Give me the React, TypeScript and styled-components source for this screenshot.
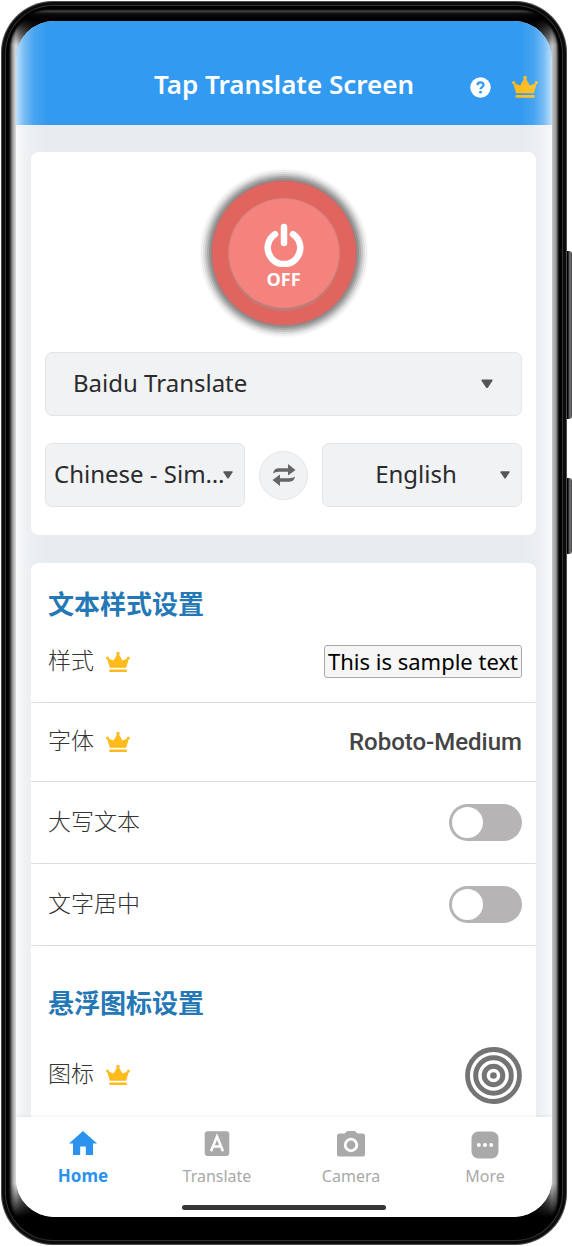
import React from "react";
import styled, { createGlobalStyle, css } from "styled-components";

const latin = `"Noto Sans", "Noto Sans CJK SC", sans-serif`;

const GlobalStyle = createGlobalStyle`
  *, *::before, *::after { box-sizing: border-box; }
  body { margin: 0; background: #fff; font-family: ${latin}; }
  button, input, select { font: inherit; color: inherit; }
  button { padding: 0; border: 0; background: none; cursor: pointer; }
  h1, h2 { margin: 0; }
`;

const Stage = styled.div`
  position: relative;
  padding: 1px 5px 1px 1px;
`;

const SideKey = styled.span<{ $top: number; $height: number }>`
  position: absolute;
  right: 0;
  top: ${(p) => p.$top}px;
  width: 6px;
  height: ${(p) => p.$height}px;
  border-radius: 0 3px 3px 0;
  background: linear-gradient(90deg, #000 0 2px, #55555a 3px, #77777a 5px, #222 6px);
`;

const Phone = styled.div`
  position: relative;
  min-height: calc(100vh - 3px);
  display: flex;
  padding: 20px 15px 28px;
  border-radius: 52px;
  overflow: hidden;
  box-shadow: inset 0 0 0 1px #4a4e4c, inset 0 0 0 4px #0c0c0c, inset 0 0 0 5px #333, inset 0 0 2px 8px #000;
  background:
    linear-gradient(180deg, #000 0, #000 8px, #444 10px, #0a0a0a 13px, #000 18px, transparent 44px),
    linear-gradient(0deg, #000 0, #000 28px, transparent 62px),
    linear-gradient(90deg, #000 7px, #333 9px, #aaa 12px, #dcdcdc 15px, #999 20px, #333 32px, #000 44px,
      #000 calc(100% - 44px), #333 calc(100% - 30px), #888 calc(100% - 19px), #c4c4c4 calc(100% - 15px), #999 calc(100% - 11px), #111 calc(100% - 8px));
`;

const Screen = styled.div`
  position: relative;
  flex: 1;
  min-width: 0;
  display: flex;
  flex-direction: column;
  overflow: hidden;
  border-radius: 38px;
  background: #e8ecef;

  &::after {
    content: "";
    position: absolute;
    inset: 0;
    pointer-events: none;
    background: linear-gradient(90deg, rgba(255, 255, 255, 0.7) 0, rgba(255, 255, 255, 0.35) 8px, rgba(255, 255, 255, 0.1) 18px, transparent 32px,
      transparent calc(100% - 32px), rgba(255, 255, 255, 0.1) calc(100% - 18px), rgba(255, 255, 255, 0.35) calc(100% - 8px), rgba(255, 255, 255, 0.7) 100%);
  }
`;

const Header = styled.header`
  display: grid;
  grid-template-columns: 1fr auto 1fr;
  align-items: center;
  height: 104px;
  padding: 22px 14px 0;
  background: #329af0;
  color: #fff;
`;

const Title = styled.h1`
  grid-column: 2;
  font-size: 26px;
  line-height: 36px;
  font-weight: 600;
  white-space: nowrap;
`;

const HeaderActions = styled.div`
  display: flex;
  justify-content: flex-end;
  align-items: center;
  gap: 21px;
  padding-top: 6px;
`;

const IconButton = styled.button`
  display: flex;
`;

const Content = styled.main`
  flex: 1;
  display: flex;
  flex-direction: column;
  gap: 28px;
  padding: 27px 16px 0 15px;
`;

const Card = styled.section`
  border-radius: 8px;
  background: #fff;
`;

const TranslateCard = styled(Card)`
  display: flex;
  flex-direction: column;
  align-items: center;
  gap: 27px;
  padding: 29px 14px 28px;
`;

const PowerButton = styled.button`
  display: flex;
  width: 144px;
  height: 144px;
  padding: 18px 17px 17px;
  border-radius: 50%;
  background: #e0655f;
  box-shadow: 0 0 0 1px #a57a78, 0 0 0 3px #929292, 0 0 0 5px #a9a9a9, 0 0 0 7px #c4c4c4,
    0 0 0 9px #dcdcdc, 0 0 0 11px #efefef, 0 0 2px 12px #f6f6f6;
`;

const PowerFace = styled.span`
  flex: 1;
  display: flex;
  flex-direction: column;
  align-items: center;
  gap: 2px;
  padding-top: 24px;
  border-radius: 50%;
  background: #f4837d;
  box-shadow: 0 3px 1px #bf7d7a, 0 0 0 1px #d5827e;
  color: #fff;
  font-family: "Open Sans", sans-serif;
  font-size: 18px;
  line-height: 20px;
  font-weight: 700;
`;

const Picker = styled.div<{ $inset: number; $caret: number; $centered?: boolean }>`
  position: relative;
  flex: 1;
  min-width: 0;
  align-self: stretch;

  select {
    appearance: none;
    display: block;
    width: 100%;
    height: 64px;
    padding: 0 ${(p) => (p.$centered ? 12 : p.$caret + 6)}px 2px ${(p) => p.$inset}px;
    border: 1px solid #e4e5e6;
    border-radius: 7px;
    background: #f0f2f4;
    color: #2b2b2b;
    font-size: 24px;
    line-height: 36px;
    text-overflow: ellipsis;
    ${(p) => p.$centered && css`text-align: center; text-align-last: center;`}
  }

  svg {
    position: absolute;
    right: ${(p) => p.$caret}px;
    top: 27px;
    pointer-events: none;
  }
`;

const LanguageRow = styled.div`
  align-self: stretch;
  display: flex;
  align-items: center;
  gap: 14px;
`;

const SwapButton = styled.button`
  display: flex;
  align-items: center;
  justify-content: center;
  flex: none;
  width: 49px;
  height: 49px;
  border: 1px solid #e4e5e6;
  border-radius: 50%;
  background: #f0f2f4;
`;

const SettingsCard = styled(Card)`
  flex: 1;
  padding-top: 22px;
  border-radius: 8px 8px 0 0;
`;

const SectionTitle = styled.h2<{ $spaced?: boolean }>`
  padding: ${(p) => (p.$spaced ? 38 : 0)}px 17px 0;
  color: #2478b5;
  font-family: "Noto Sans CJK SC", sans-serif;
  font-size: 26px;
  line-height: 36px;
  font-weight: 700;
`;

const SettingRow = styled.div<{ $height: number; $last?: boolean }>`
  display: flex;
  align-items: center;
  justify-content: space-between;
  height: ${(p) => p.$height}px;
  padding: ${(p) => (p.$last ? 14 : 0)}px 14px 0 17px;
  border-bottom: ${(p) => (p.$last ? "0" : "1px solid #dcdcdc")};
`;

const RowLabel = styled.label`
  display: flex;
  align-items: center;
  gap: 12px;
  color: #333;
  font-family: "Noto Sans CJK SC", sans-serif;
  font-size: 23px;
  line-height: 34px;
  font-weight: 300;

  span { padding-bottom: 6px; }
`;

const SampleButton = styled.button`
  padding: 0 3px;
  border: 1px solid #a9a9a9;
  border-radius: 3px;
  background: #f6f6f6;
  color: #000;
  font-size: 22px;
  line-height: 31px;
  white-space: nowrap;
`;

const FontButton = styled.button`
  color: #444;
  font-family: Roboto, sans-serif;
  font-size: 24px;
  line-height: 34px;
  font-weight: 500;
`;

const Toggle = styled.input`
  appearance: none;
  display: flex;
  align-items: center;
  width: 73px;
  height: 37px;
  margin: 0;
  padding: 3px;
  border-radius: 19px;
  background: #b6b4b5;
  cursor: pointer;

  &::before {
    content: "";
    width: 31px;
    height: 31px;
    border-radius: 50%;
    background: #fff;
  }

  &:checked { justify-content: flex-end; background: #329af0; }
`;

const BottomBar = styled.footer`
  display: flex;
  flex-direction: column;
  align-items: center;
  height: 100px;
  padding-bottom: 7px;
  background: #fff;
  box-shadow: 0 -1px 3px rgba(0, 0, 0, 0.06);
  z-index: 1;
`;

const Tabs = styled.nav`
  align-self: stretch;
  flex: 1;
  display: grid;
  grid-template-columns: repeat(4, 1fr);
`;

const Tab = styled.a<{ $active?: boolean }>`
  display: flex;
  flex-direction: column;
  align-items: center;
  gap: 5px;
  padding-top: 12px;
  color: ${(p) => (p.$active ? "#2b93ee" : "#a9a9a9")};
  font-size: ${(p) => (p.$active ? 17 : 16)}px;
  line-height: 24px;
  font-weight: ${(p) => (p.$active ? 700 : 400)};
  text-decoration: none;
`;

const HomeIndicator = styled.div`
  width: 38%;
  height: 5px;
  border-radius: 3px;
  background: #373737;
`;

const Crown = ({ size }: { size: number }) => (
  <svg width={size} height={size} viewBox="0 0 24 24" fill="#ffbb1c" aria-hidden="true">
    <path d="M3.800 17.800 1 8 7.500 10.500 12 3l4.500 7.500L23 8l-2.800 9.800Z" />
    <circle cx="12" cy="3.400" r="1.700" />
    <circle cx="1.600" cy="8" r="1.500" />
    <circle cx="22.400" cy="8" r="1.500" />
    <rect x="3.200" y="19.400" width="17.800" height="2.600" rx="1" />
  </svg>
);

const Caret = ({ width }: { width: number }) => (
  <svg width={width} height="10" viewBox="0 0 12 10" aria-hidden="true">
    <path d="M1 .5h10q1 .3.5 1.200L7 8.500q-1 1.200-2 0L.5 1.700Q0 .8 1 .5Z" fill="#555" />
  </svg>
);

const Help = () => (
  <svg width="21" height="21" viewBox="0 0 21 21" aria-hidden="true">
    <circle cx="10.500" cy="10.500" r="10.200" fill="#fff" />
    <path d="M7.500 8.200c0-3.800 6-3.700 6-.2 0 2.200-2.900 2-2.900 4.300" fill="none" stroke="#329af0" strokeWidth="2.300" />
    <circle cx="10.500" cy="15.200" r="1.400" fill="#329af0" />
  </svg>
);

const PowerIcon = () => (
  <svg width="40" height="44" viewBox="0 0 40 44" fill="none" stroke="#fff" strokeLinecap="round" aria-hidden="true">
    <path d="M20 4v16" strokeWidth="6.500" />
    <path d="M11 11.200a16.300 16.300 0 1 0 18 0" strokeWidth="6.500" />
  </svg>
);

const SwapIcon = () => (
  <svg width="24" height="24" viewBox="0 0 24 24" fill="#666" aria-hidden="true">
    <path d="M1 10.500Q2 5.300 6.500 5.300H16V1l7.500 5.900L16 12.500V8.700H7Q3 8.700 1 10.500Z" />
    <path d="M23 13.500q-1 5.200-5.500 5.200H8V23L.5 17.100 8 11.500v3.800h9q4 0 6-1.800Z" />
  </svg>
);

const TargetIcon = () => (
  <svg width="57" height="57" viewBox="0 0 57 57" fill="none" stroke="#747474" aria-hidden="true">
    <circle cx="28.500" cy="28.500" r="26" strokeWidth="4.800" />
    <circle cx="28.500" cy="28.500" r="17.800" strokeWidth="5" />
    <circle cx="28.500" cy="28.500" r="9.300" strokeWidth="5" />
    <circle cx="28.500" cy="28.500" r="3.300" fill="#747474" stroke="none" />
  </svg>
);

const HomeIcon = () => (
  <svg width="30" height="30" viewBox="0 0 30 30" fill="currentColor" aria-hidden="true">
    <path d="M15 2 29 14.500h-4V26h-7.200v-8.600h-5.600V26H5V14.500H1Z" />
  </svg>
);

const TranslateIcon = () => (
  <svg width="30" height="30" viewBox="0 0 30 30" aria-hidden="true">
    <rect x="2.700" y="2.300" width="24.600" height="24.600" rx="3" fill="currentColor" />
    <path d="M9 22.300 15 7.500l6 14.800M11.200 17.600h7.600" fill="none" stroke="#fff" strokeWidth="2.500" />
  </svg>
);

const CameraIcon = () => (
  <svg width="30" height="30" viewBox="0 0 30 30" aria-hidden="true">
    <path d="M3.500 4.500h5L11.200 2h7.600l2.700 2.500h5q2.500 0 2.500 2.500v18q0 2.500-2.500 2.500h-23Q1 27.500 1 25V7q0-2.500 2.500-2.500Z" fill="currentColor" />
    <circle cx="15" cy="16" r="5.800" fill="none" stroke="#fff" strokeWidth="2.800" />
  </svg>
);

const MoreIcon = () => (
  <svg width="30" height="30" viewBox="0 0 30 30" aria-hidden="true">
    <rect x="1.500" y="2.500" width="27" height="27" rx="7" fill="currentColor" />
    <g fill="#fff">
      <circle cx="8.800" cy="16" r="2" />
      <circle cx="15" cy="16" r="2" />
      <circle cx="21.200" cy="16" r="2" />
    </g>
  </svg>
);

export default function App() {
  return (
    <Stage>
      <GlobalStyle />
      <SideKey $top={251} $height={168} />
      <SideKey $top={478} $height={76} />
      <Phone>
        <Screen>
          <Header>
            <Title>Tap Translate Screen</Title>
            <HeaderActions>
              <IconButton aria-label="Help"><Help /></IconButton>
              <IconButton aria-label="Premium"><Crown size={26} /></IconButton>
            </HeaderActions>
          </Header>
          <Content>
            <TranslateCard>
              <PowerButton>
                <PowerFace>
                  <PowerIcon />
                  OFF
                </PowerFace>
              </PowerButton>
              <Picker $inset={27} $caret={29}>
                <select aria-label="Translation service"><option>Baidu Translate</option></select>
                <Caret width={12} />
              </Picker>
              <LanguageRow>
                <Picker $inset={8} $caret={12}>
                  <select aria-label="Source language"><option>Chinese - Simplified</option></select>
                  <Caret width={10} />
                </Picker>
                <SwapButton aria-label="Swap languages"><SwapIcon /></SwapButton>
                <Picker $inset={0} $caret={12} $centered>
                  <select aria-label="Target language"><option>English</option></select>
                  <Caret width={10} />
                </Picker>
              </LanguageRow>
            </TranslateCard>
            <SettingsCard>
              <SectionTitle>文本样式设置</SectionTitle>
              <SettingRow $height={82}>
                <RowLabel htmlFor="style"><span>样式</span><Crown size={24} /></RowLabel>
                <SampleButton id="style">This is sample text</SampleButton>
              </SettingRow>
              <SettingRow $height={79}>
                <RowLabel htmlFor="font"><span>字体</span><Crown size={24} /></RowLabel>
                <FontButton id="font">Roboto-Medium</FontButton>
              </SettingRow>
              <SettingRow $height={82}>
                <RowLabel htmlFor="caps"><span>大写文本</span></RowLabel>
                <Toggle type="checkbox" role="switch" id="caps" />
              </SettingRow>
              <SettingRow $height={82}>
                <RowLabel htmlFor="center"><span>文字居中</span></RowLabel>
                <Toggle type="checkbox" role="switch" id="center" />
              </SettingRow>
              <SectionTitle $spaced>悬浮图标设置</SectionTitle>
              <SettingRow $height={96} $last>
                <RowLabel htmlFor="icon"><span>图标</span><Crown size={24} /></RowLabel>
                <IconButton id="icon"><TargetIcon /></IconButton>
              </SettingRow>
            </SettingsCard>
          </Content>
          <BottomBar>
            <Tabs>
              <Tab href="#home" $active><HomeIcon />Home</Tab>
              <Tab href="#translate"><TranslateIcon />Translate</Tab>
              <Tab href="#camera"><CameraIcon />Camera</Tab>
              <Tab href="#more"><MoreIcon />More</Tab>
            </Tabs>
            <HomeIndicator />
          </BottomBar>
        </Screen>
      </Phone>
    </Stage>
  );
}
